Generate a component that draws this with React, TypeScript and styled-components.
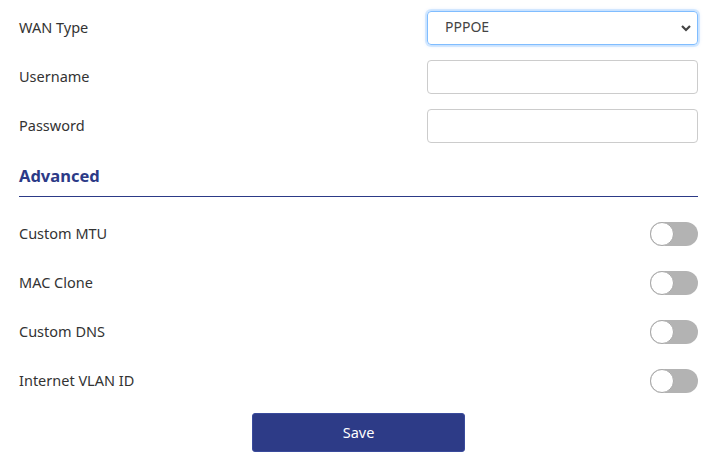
import React, { useState } from "react";
import styled, { createGlobalStyle } from "styled-components";

const Global = createGlobalStyle`
  html, body { margin: 0; padding: 0; background: #fff; }
  body { font-family: "Noto Sans", "Open Sans", sans-serif; color: #333; }
  * { box-sizing: border-box; }
`;

const Page = styled.div`
  width: 719px;
  padding: 3px 21px 0 19px;
  display: flex;
  flex-direction: column;
`;

const Row = styled.div`
  height: 49px;
  display: flex;
  align-items: center;
  justify-content: space-between;
`;

const Label = styled.span`
  font-size: 14.5px;
  color: #333;
  margin-top: -2px;
`;

const Field = styled.input<{ $focus?: boolean }>`
  width: 271px;
  height: 34px;
  border: 1px solid ${(p) => (p.$focus ? "#80bdff" : "#ccc")};
  border-radius: 4px;
  padding: 0 16px;
  font-family: inherit;
  font-size: 14px;
  color: #444;
  outline: none;
  background: #fff;
`;

const SelectBox = styled.div`
  position: relative;
  width: 271px;
  height: 34px;
  border: 1px solid #80bdff;
  border-radius: 4px;
  box-shadow: 0 0 0 2px rgba(0, 123, 255, 0.12), 0 0 4px rgba(0, 123, 255, 0.25);
  display: flex;
  align-items: center;
  padding: 0 17px 2px;
  font-size: 14px;
  color: #444;
`;

const Chevron = styled.svg`
  position: absolute;
  right: 5px;
  top: 12px;
`;

const Heading = styled.div`
  height: 47px;
  display: flex;
  align-items: flex-end;
  padding-bottom: 9px;
  border-bottom: 1px solid #2c3a87;
  font-size: 16.5px;
  font-weight: 700;
  color: #2c3a87;
  margin-bottom: 12px;
`;

const Toggle = styled.button<{ $on: boolean }>`
  width: 48px;
  height: 24px;
  border-radius: 12px;
  border: none;
  padding: 0;
  background: ${(p) => (p.$on ? "#2d3b87" : "#b3b3b3")};
  position: relative;
  cursor: pointer;
`;

const Knob = styled.span<{ $on: boolean }>`
  position: absolute;
  top: 0;
  left: ${(p) => (p.$on ? "24px" : "0")};
  width: 24px;
  height: 24px;
  border-radius: 50%;
  background: #fff;
  border: 1.5px solid #a8a8a8;
`;

const Footer = styled.div`
  display: flex;
  justify-content: center;
  padding-top: 8px;
`;

const SaveButton = styled.button`
  width: 213px;
  height: 39px;
  background: #2d3b87;
  border: 1px solid #3a4b9c;
  border-radius: 3px;
  color: #fff;
  font-family: inherit;
  font-size: 14.5px;
  padding-bottom: 2px;
`;

const toggles = ["Custom MTU", "MAC Clone", "Custom DNS", "Internet VLAN ID"];

export default function App() {
  const [on, setOn] = useState<boolean[]>([false, false, false, false]);
  return (
    <>
      <Global />
      <Page>
        <Row>
          <Label>WAN Type</Label>
          <SelectBox>
            PPPOE
            <Chevron width="12" height="8" viewBox="0 0 12 8">
              <path d="M2 2 L6 6 L10 2" stroke="#444" strokeWidth="2.2" fill="none" />
            </Chevron>
          </SelectBox>
        </Row>
        <Row>
          <Label>Username</Label>
          <Field />
        </Row>
        <Row>
          <Label>Password</Label>
          <Field type="password" />
        </Row>
        <Heading>Advanced</Heading>
        {toggles.map((t, i) => (
          <Row key={t}>
            <Label>{t}</Label>
            <Toggle
              $on={on[i]}
              onClick={() => setOn(on.map((v, j) => (j === i ? !v : v)))}
            >
              <Knob $on={on[i]} />
            </Toggle>
          </Row>
        ))}
        <Footer>
          <SaveButton>Save</SaveButton>
        </Footer>
      </Page>
    </>
  );
}
